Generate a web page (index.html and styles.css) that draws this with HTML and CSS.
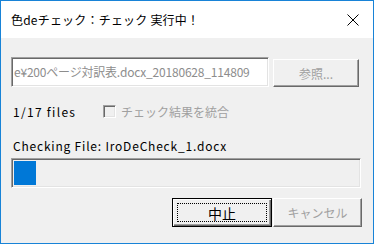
FILE: index.html
```html
<!DOCTYPE html>
<html lang="ja">
<head>
    <meta charset="UTF-8">
    <title>色deチェック：チェック 実行中！</title>
    <link rel="stylesheet" href="styles.css">
</head>
<body>

    <div class="window">
        <div class="titlebar">
            <span class="title">色deチェック：チェック 実行中！</span>
            <svg class="close" width="12" height="12" viewBox="0 0 12 12">
                <path d="M0.5 0.5 L11.5 11.5 M11.5 0.5 L0.5 11.5" stroke="#000" stroke-width="1" fill="none"/>
            </svg>
        </div>

        <div class="client">
            <div class="file-row">
                <div class="path-field">e¥200ページ対訳表.docx_20180628_114809</div>
                <button class="btn browse" disabled>参照...</button>
            </div>

            <div class="status-row">
                <span class="count">1/17 files</span>
                <span class="checkbox"></span>
                <span class="check-label">チェック結果を統合</span>
            </div>

            <div class="current-file">Checking File: IroDeCheck_1.docx</div>

            <div class="progress">
                <div class="progress-fill" style="width: 22px"></div>
            </div>

            <div class="button-row">
                <button class="btn default"><span class="focus">中止</span></button>
                <button class="btn cancel" disabled>キャンセル</button>
            </div>
        </div>
    </div>

</body>
</html>
```

FILE: styles.css
```css
body {
    margin: 0;
    font-family: "Noto Sans CJK JP", "Noto Sans", sans-serif;
    font-size: 12px;
    color: #000;
}
.window {
    width: 374px;
    height: 244px;
    box-sizing: border-box;
    border: 1px solid #1883d7;
    display: flex;
    flex-direction: column;
}
.titlebar {
    height: 37px;
    background-color: #fff;
    display: flex;
    align-items: center;
    justify-content: space-between;
    padding: 0 14px 0 10px;
}
.title {
    font-size: 12px;
    letter-spacing: 0.2px;
}
.close {
    display: block;
}
.client {
    flex: 1;
    background-color: #f0f0f0;
    padding: 19px 0 0 10px;
}
.file-row {
    display: flex;
    align-items: flex-end;
}
.path-field {
    width: 258px;
    height: 30px;
    box-sizing: border-box;
    background-color: #fff;
    border: 1px solid;
    border-color: #a0a0a0 #fff #fff #a0a0a0;
    box-shadow: inset 1px 1px 0 #696969, inset -1px -1px 0 #e3e3e3;
    color: #8d8d8d;
    line-height: 27px;
    padding-left: 2px;
    letter-spacing: -0.2px;
    white-space: nowrap;
    overflow: hidden;
}
.btn {
    font-family: inherit;
    font-size: 12px;
    background-color: #f0f0f0;
    border: 1px solid;
    border-color: #fff #696969 #696969 #fff;
    box-shadow: inset -1px -1px 0 #a0a0a0;
    padding: 0;
    margin: 0;
    color: #000;
}
.btn:disabled {
    color: #a0a0a0;
}
.browse {
    width: 86px;
    height: 28px;
    margin-left: 4px;
}
.status-row {
    display: flex;
    align-items: center;
    height: 13px;
    margin-top: 18px;
}
.count {
    width: 92px;
    padding-left: 2px;
    box-sizing: border-box;
    letter-spacing: 1.3px;
}
.checkbox {
    width: 13px;
    height: 13px;
    box-sizing: border-box;
    border: 1px solid;
    border-color: #a0a0a0 #fff #fff #a0a0a0;
    box-shadow: inset 1px 1px 0 #696969, inset -1px -1px 0 #e3e3e3;
    background-color: #f0f0f0;
    margin-right: 5px;
}
.check-label {
    color: #a0a0a0;
}
.current-file {
    margin-top: 21px;
    padding-left: 2px;
    line-height: 14px;
    letter-spacing: 0.8px;
}
.progress {
    width: 350px;
    height: 30px;
    box-sizing: border-box;
    margin-top: 5px;
    border: 1px solid;
    border-color: #a0a0a0 #fff #fff #a0a0a0;
    box-shadow: inset 1px 1px 0 #696969, inset -1px -1px 0 #e3e3e3;
    background-color: #f0f0f0;
    padding: 2px 2px 2px 2px;
}
.progress-fill {
    height: 100%;
    background-color: #0078d7;
}
.button-row {
    display: flex;
    justify-content: flex-end;
    width: 351px;
    margin-top: 10px;
}
.default {
    width: 100px;
    height: 29px;
    border: 1px solid #000;
    box-shadow: inset 1px 1px 0 #fff, inset -1px -1px 0 #696969, inset -2px -2px 0 #a0a0a0;
    padding: 4px;
    font-size: 14px;
}
.focus {
    display: flex;
    align-items: center;
    justify-content: center;
    height: 100%;
    box-sizing: border-box;
    border: 1px dotted #000;
}
.cancel {
    width: 89px;
    height: 29px;
    margin-left: 1px;
}
```
